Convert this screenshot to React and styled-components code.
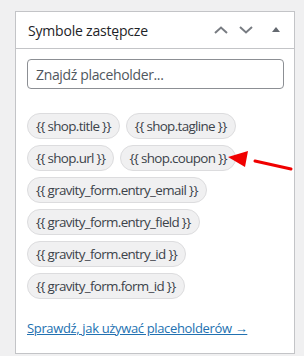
import React from 'react'
import styled, { createGlobalStyle } from 'styled-components'

const Global = createGlobalStyle`
    body {
        margin: 0;
        background: #f0f0f1;
        font-family: "Open Sans", "Noto Sans", sans-serif;
    }
`;

const Page = styled.div`
    padding: 11px 9px 5px 15px;
`;

const Panel = styled.div`
    position: relative;
    width: 280px;
    box-sizing: border-box;
    background: #fff;
    border: 1px solid #c3c4c7;
`;

const Header = styled.div`
    height: 36px;
    display: flex;
    align-items: center;
    border-bottom: 1px solid #c3c4c7;
    padding: 0 0 0 12px;
`;

const Title = styled.h2`
    flex: 1;
    margin: 0;
    font-size: 14px;
    font-weight: 500;
    color: #1d2327;
    letter-spacing: -0.2px;
`;

const Handle = styled.button`
    width: ${p => p.$w || 25}px;
    height: 36px;
    padding: 0;
    border: 0;
    background: none;
    display: flex;
    align-items: center;
    justify-content: center;
    color: ${p => p.$color || '#787c82'};
`;

const Body = styled.div`
    padding: 10px 10px 15px 11px;
`;

const Search = styled.input`
    display: block;
    width: 100%;
    height: 30px;
    box-sizing: border-box;
    border: 1px solid #8c8f94;
    border-radius: 4px;
    padding: 0 8px;
    font-family: inherit;
    font-size: 14px;
    letter-spacing: -0.35px;
    color: #2c3338;
    &::placeholder {
        color: #50575e;
    }
`;

const Chips = styled.div`
    display: flex;
    flex-wrap: wrap;
    gap: 6px;
    margin-top: 24px;
`;

const Chip = styled.span`
    height: 26px;
    box-sizing: border-box;
    display: inline-flex;
    align-items: center;
    padding: 0 8px;
    background: #f0f0f1;
    border: 1px solid #dcdcde;
    border-radius: 13px;
    font-size: 13.4px;
    color: #3c434a;
    letter-spacing: -0.65px;
    white-space: nowrap;
`;

const HelpLink = styled.a`
    display: inline-block;
    margin-top: 20px;
    font-size: 13px;
    color: #2271b1;
    text-decoration: underline;
    letter-spacing: -0.35px;
`;

const Arrow = styled.svg`
    position: absolute;
    left: 211px;
    top: 129px;
`;

const chips = [
    'shop.title',
    'shop.tagline',
    'shop.url',
    'shop.coupon',
    'gravity_form.entry_email',
    'gravity_form.entry_field',
    'gravity_form.entry_id',
    'gravity_form.form_id',
];

export default function App() {
    return (
        <Page>
            <Global />
            <Panel>
                <Header>
                    <Title>Symbole zastępcze</Title>
                    <Handle>
                        <svg width="14" height="8" viewBox="0 0 14 8">
                            <path d="M1 7 L7 1.5 L13 7" fill="none" stroke="currentColor" strokeWidth="2" />
                        </svg>
                    </Handle>
                    <Handle>
                        <svg width="14" height="8" viewBox="0 0 14 8">
                            <path d="M1 1 L7 6.5 L13 1" fill="none" stroke="currentColor" strokeWidth="2" />
                        </svg>
                    </Handle>
                    <Handle $w={36} $color="#646970">
                        <svg width="8" height="6" viewBox="0 0 8 6">
                            <path d="M4 0 L8 5 L0 5 Z" fill="currentColor" />
                        </svg>
                    </Handle>
                </Header>
                <Body>
                    <Search placeholder="Znajdź placeholder..." />
                    <Chips>
                        {chips.map(c => (
                            <Chip key={c}>{`{{ ${c} }}`}</Chip>
                        ))}
                    </Chips>
                    <HelpLink href="#">Sprawdź, jak używać placeholderów →</HelpLink>
                </Body>
                <Arrow width="70" height="34" viewBox="0 0 70 34">
                    <path d="M64 28 L28 20" stroke="#f00000" strokeWidth="3" strokeLinecap="round" />
                    <path d="M1 16 L21 10 L18 26 Z" fill="#f00000" />
                </Arrow>
            </Panel>
        </Page>
    )
}
